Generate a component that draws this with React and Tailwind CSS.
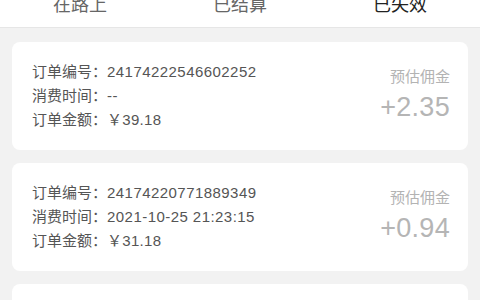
const tabs = ['在路上', '已结算', '已失效'];

const orders = [
  { no: '24174222546602252', time: '--', amount: '39.18', commission: '+2.35' },
  { no: '24174220771889349', time: '2021-10-25 21:23:15', amount: '31.18', commission: '+0.94' },
  { no: '24174220512367718', time: '2021-10-24 18:02:41', amount: '26.50', commission: '+0.80' },
];

const OrderCard = ({ order }) => (
  <div className="bg-white rounded-lg flex justify-between pl-5 pr-[18px] py-[18px]">
    <div className="text-[15px] leading-[24px] text-[#555555]">
      <div>
        订单编号：<span className="tracking-[0.45px]">{order.no}</span>
      </div>
      <div>
        消费时间：<span className="tracking-[0.45px]">{order.time}</span>
      </div>
      <div>
        订单金额：<span className="tracking-[0.3px]">￥{order.amount}</span>
      </div>
    </div>
    <div className="flex flex-col items-end">
      <div className="text-[15px] leading-[22px] mt-[6px] text-[#b3b3b3]">预估佣金</div>
      <div className="text-[27px] leading-[32px] mt-[3px] text-[#b5b5b5] tracking-[0.3px]">
        {order.commission}
      </div>
    </div>
  </div>
);

const App = () => {
  return (
    <div
      className="min-h-screen bg-[#f2f2f2]"
      style={{ fontFamily: '"Liberation Sans", "Noto Sans CJK SC", sans-serif' }}
    >
      <div className="h-[28px] bg-white border-b border-[#e6e6e6] flex">
        {tabs.map((tab, i) => (
          <div key={tab} className="flex-1 h-full flex flex-col items-center justify-end">
            <span
              className={
                i === 2
                  ? 'text-[18px] leading-[18px] mb-[13px] text-[#222222]'
                  : 'text-[18px] leading-[18px] mb-[13px] text-[#666666]'
              }
            >
              {tab}
            </span>
            <div className={i === 2 ? 'h-[3px] w-16 bg-[#f5cd50]' : 'h-[3px] w-16 bg-transparent'} />
          </div>
        ))}
      </div>
      <div className="px-3 pt-[14px] space-y-[13px]">
        {orders.map((order) => (
          <OrderCard key={order.no} order={order} />
        ))}
      </div>
    </div>
  );
};

export default App;
